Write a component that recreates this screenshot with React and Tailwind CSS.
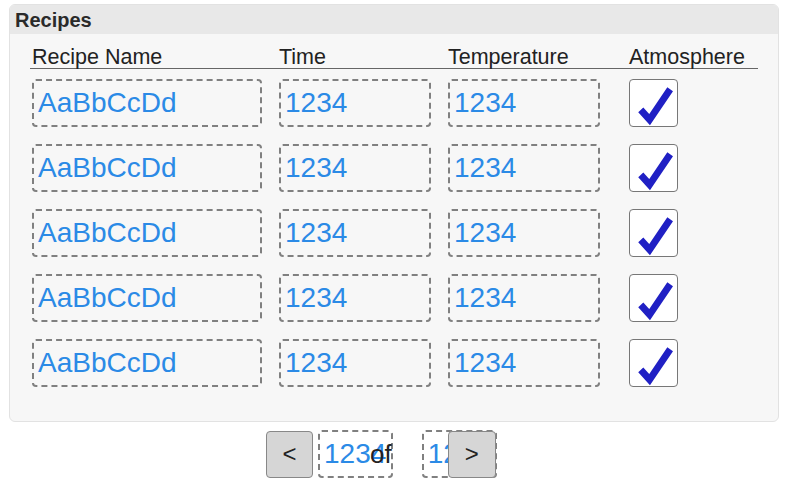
import React from 'react';

const ROWS = [0, 1, 2, 3, 4];

const Check = () => (
    <svg width="48" height="48" viewBox="0 0 48 48">
        <polyline points="11,31 20,41 41,10" fill="none" stroke="#2020c4" strokeWidth="7" strokeLinecap="butt" strokeLinejoin="miter" />
    </svg>
);

const Field = ({ value, className }) => (
    <div className={`h-[48px] border-2 border-dashed border-[#808080] rounded-[4px] pl-[4px] flex items-center text-[28px] text-[#2b8ae6] overflow-hidden whitespace-nowrap ${className}`}>
        {value}
    </div>
);

const App = () => {
    return (
        <div className="min-h-screen bg-white font-['Liberation_Sans',Arial,sans-serif]">
            <div className="ml-[9px] pt-[4px] w-[770px]">
                <div className="h-[418px] border border-[#e2e2e2] rounded-[6px] bg-[#f7f7f7] overflow-hidden">
                    <div className="h-[29px] bg-[#e8e8e8] pl-[5px] flex items-center text-[20px] font-bold text-[#2a2a2a] leading-none">
                        Recipes
                    </div>
                    <div className="ml-[20px] w-[728px] pt-[12px]">
                        <div className="grid grid-cols-[247px_169px_181px_131px] border-b border-[#666] text-[21.5px] text-[#222] leading-[22px]">
                            <div className="pl-[2px]">Recipe Name</div>
                            <div className="pl-[2px]">Time</div>
                            <div className="pl-[2px]">Temperature</div>
                            <div className="pl-[2px]">Atmosphere</div>
                        </div>
                        <div className="flex flex-col gap-[17px] pt-[10px]">
                            {ROWS.map((r) => (
                                <div key={r} className="grid grid-cols-[247px_169px_181px_131px]">
                                    <div className="pl-[2px]"><Field value="AaBbCcDd" className="w-[230px]" /></div>
                                    <div className="pl-[2px]"><Field value="1234" className="w-[152px]" /></div>
                                    <div className="pl-[2px]"><Field value="1234" className="w-[152px]" /></div>
                                    <div className="pl-[2px]">
                                        <div className="w-[49px] h-[48px] bg-white border border-[#777] rounded-[4px] flex items-center justify-center">
                                            <Check />
                                        </div>
                                    </div>
                                </div>
                            ))}
                        </div>
                    </div>
                </div>
                <div className="flex items-center mt-[8px] ml-[257px]">
                    <button className="w-[47px] h-[47px] bg-[#d6d6d6] border border-[#888] rounded-[4px] text-[24px] text-[#222] flex items-center justify-center">&lt;</button>
                    <Field value="1234" className="ml-[5px] w-[75px] h-[47px]" />
                    <span className="ml-[-23px] text-[26px] text-[#222] relative">of</span>
                    <Field value="1234" className="ml-[30px] w-[75px] h-[47px]" />
                    <button className="ml-[-49px] relative w-[48px] h-[47px] bg-[#d6d6d6] border border-[#888] rounded-[4px] text-[24px] text-[#222] flex items-center justify-center">&gt;</button>
                </div>
            </div>
        </div>
    );
};

export default App;
